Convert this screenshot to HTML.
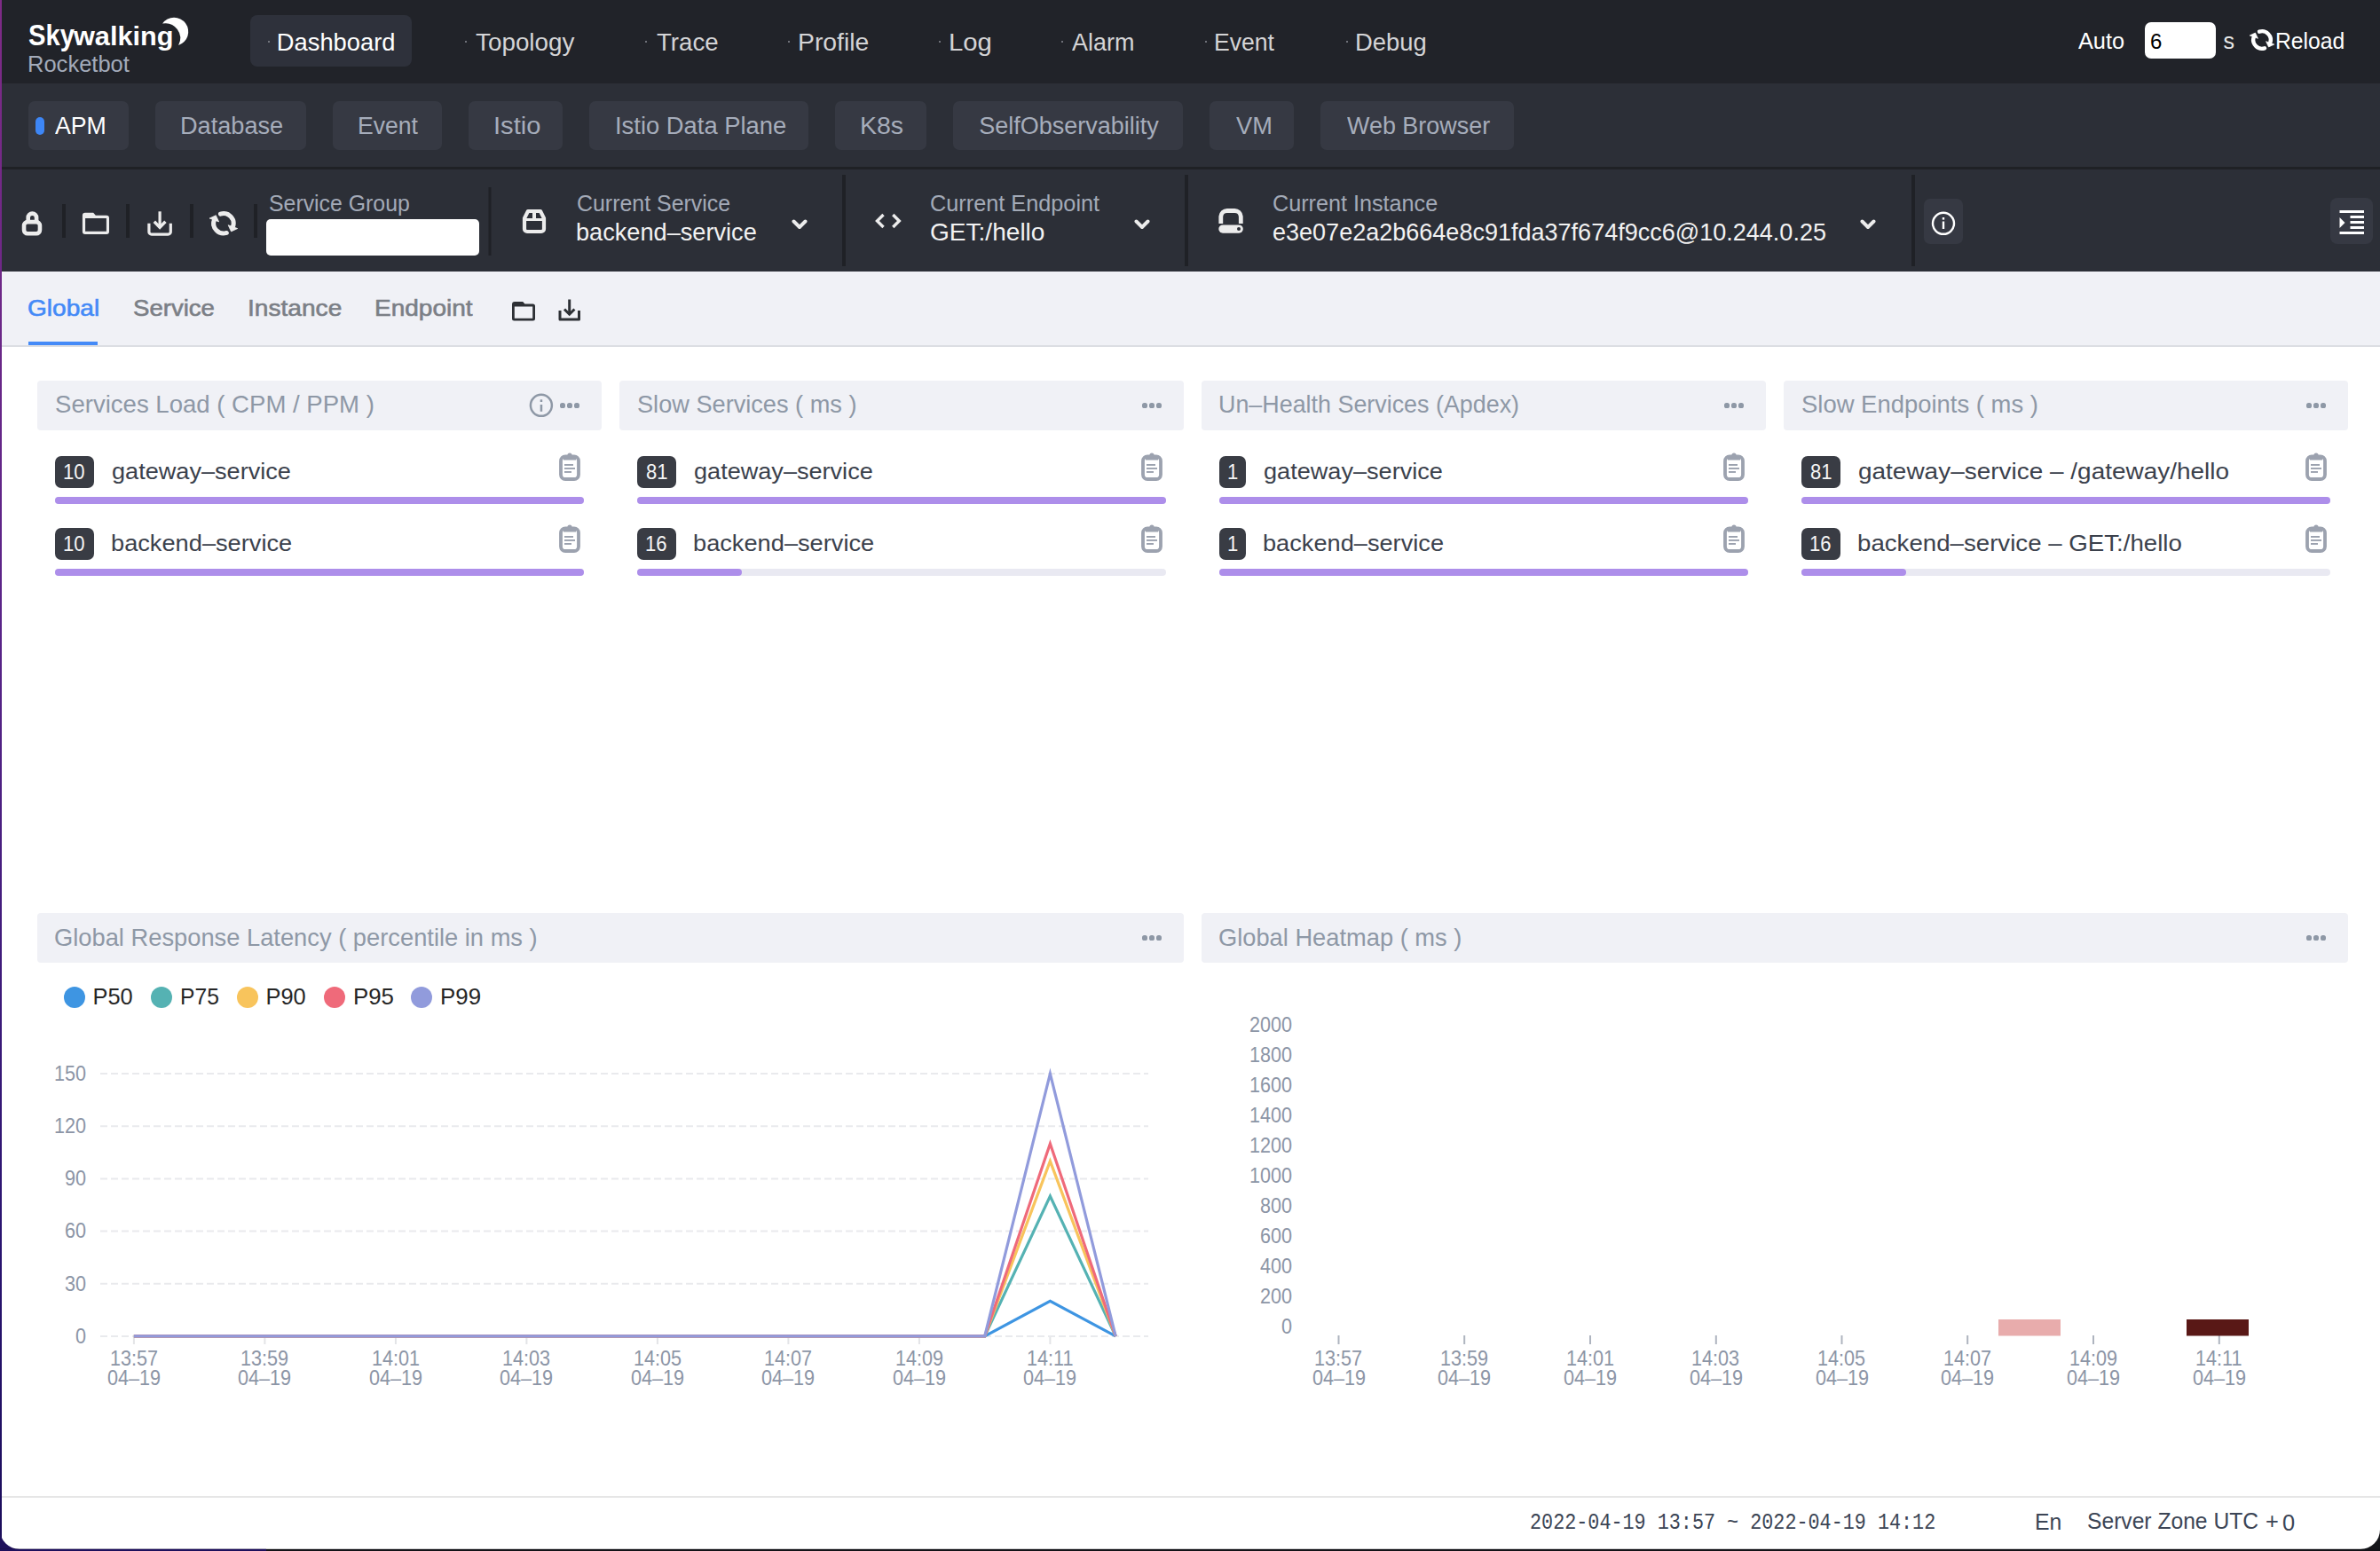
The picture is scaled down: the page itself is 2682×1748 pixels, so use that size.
<!DOCTYPE html>
<html><head><meta charset="utf-8"><title>SkyWalking</title>
<style>
html,body{margin:0;padding:0;}
body{width:2682px;height:1748px;position:relative;overflow:hidden;background:#fff;font-family:"Liberation Sans",sans-serif;}
</style></head><body>
<div style="position:absolute;left:0px;top:0px;width:2682px;height:94px;background:#212329;border-radius:0px;"></div>
<div style="position:absolute;left:0px;top:94px;width:2682px;height:94px;background:#2c2f37;border-radius:0px;"></div>
<div style="position:absolute;left:0px;top:188px;width:2682px;height:2.5px;background:#1f2125;border-radius:0px;"></div>
<div style="position:absolute;left:0px;top:191px;width:2682px;height:115px;background:#2c2f37;border-radius:0px;"></div>
<div style="position:absolute;left:0px;top:306px;width:2682px;height:83px;background:#f0f1f6;border-radius:0px;"></div>
<div style="position:absolute;left:0px;top:389px;width:2682px;height:2px;background:#dcdee3;border-radius:0px;"></div>
<div style="position:absolute;left:0px;top:1686px;width:2682px;height:2px;background:#e6e6e6;border-radius:0px;"></div>
<svg style="position:absolute;left:0;top:0" width="240" height="94" viewBox="0 0 240 94">
<path d="M183.1 26.6 A16 16 0 1 1 201.1 51 A16.8 16.8 0 0 0 183.1 26.6 Z" fill="#fff"/>
</svg>
<div style="position:absolute;left:31.64px;top:23.24px;font-family:'Liberation Sans';font-size:33.50px;line-height:33.50px;color:#fff;font-weight:bold;white-space:pre;transform:scaleX(0.8719);transform-origin:0 0;">Sky</div>
<div style="position:absolute;left:82.98px;top:26.10px;font-family:'Liberation Sans';font-size:30.00px;line-height:30.00px;color:#fff;font-weight:bold;white-space:pre;transform:scaleX(1.0223);transform-origin:0 0;">walking</div>
<div style="position:absolute;left:31.01px;top:59.83px;font-family:'Liberation Sans';font-size:25.00px;line-height:25.00px;color:#a3abba;font-weight:normal;white-space:pre;transform:scaleX(1.0208);transform-origin:0 0;">Rocketbot</div>
<div style="position:absolute;left:282px;top:17px;width:182px;height:58px;background:#2e313b;border-radius:8px;"></div>
<div style="position:absolute;left:311.87px;top:33.89px;font-family:'Liberation Sans';font-size:27.30px;line-height:27.30px;color:#ffffff;font-weight:normal;white-space:pre;">Dashboard</div>
<div style="position:absolute;left:302px;top:46px;width:2px;height:2px;background:#8a8d94;border-radius:1px;"></div>
<div style="position:absolute;left:535.57px;top:33.89px;font-family:'Liberation Sans';font-size:27.30px;line-height:27.30px;color:#d4d4d6;font-weight:normal;white-space:pre;transform:scaleX(1.0197);transform-origin:0 0;">Topology</div>
<div style="position:absolute;left:524px;top:46px;width:2px;height:2px;background:#8a8d94;border-radius:1px;"></div>
<div style="position:absolute;left:739.57px;top:33.89px;font-family:'Liberation Sans';font-size:27.30px;line-height:27.30px;color:#d4d4d6;font-weight:normal;white-space:pre;transform:scaleX(1.0113);transform-origin:0 0;">Trace</div>
<div style="position:absolute;left:727px;top:46px;width:2px;height:2px;background:#8a8d94;border-radius:1px;"></div>
<div style="position:absolute;left:898.78px;top:33.89px;font-family:'Liberation Sans';font-size:27.30px;line-height:27.30px;color:#d4d4d6;font-weight:normal;white-space:pre;transform:scaleX(1.0385);transform-origin:0 0;">Profile</div>
<div style="position:absolute;left:888px;top:46px;width:2px;height:2px;background:#8a8d94;border-radius:1px;"></div>
<div style="position:absolute;left:1068.71px;top:33.89px;font-family:'Liberation Sans';font-size:27.30px;line-height:27.30px;color:#d4d4d6;font-weight:normal;white-space:pre;transform:scaleX(1.0744);transform-origin:0 0;">Log</div>
<div style="position:absolute;left:1058px;top:46px;width:2px;height:2px;background:#8a8d94;border-radius:1px;"></div>
<div style="position:absolute;left:1208.00px;top:33.89px;font-family:'Liberation Sans';font-size:27.30px;line-height:27.30px;color:#d4d4d6;font-weight:normal;white-space:pre;transform:scaleX(0.9875);transform-origin:0 0;">Alarm</div>
<div style="position:absolute;left:1196px;top:46px;width:2px;height:2px;background:#8a8d94;border-radius:1px;"></div>
<div style="position:absolute;left:1367.92px;top:33.89px;font-family:'Liberation Sans';font-size:27.30px;line-height:27.30px;color:#d4d4d6;font-weight:normal;white-space:pre;transform:scaleX(0.9739);transform-origin:0 0;">Event</div>
<div style="position:absolute;left:1358px;top:46px;width:2px;height:2px;background:#8a8d94;border-radius:1px;"></div>
<div style="position:absolute;left:1526.86px;top:33.89px;font-family:'Liberation Sans';font-size:27.30px;line-height:27.30px;color:#d4d4d6;font-weight:normal;white-space:pre;transform:scaleX(1.0028);transform-origin:0 0;">Debug</div>
<div style="position:absolute;left:1517px;top:46px;width:2px;height:2px;background:#8a8d94;border-radius:1px;"></div>
<div style="position:absolute;left:2342.00px;top:33.83px;font-family:'Liberation Sans';font-size:25.00px;line-height:25.00px;color:#fff;font-weight:normal;white-space:pre;transform:scaleX(1.0116);transform-origin:0 0;">Auto</div>
<div style="position:absolute;left:2417px;top:25px;width:80px;height:41px;background:#fff;border-radius:7px;"></div>
<div style="position:absolute;left:2422.88px;top:34.68px;font-family:'Liberation Sans';font-size:24.00px;line-height:24.00px;color:#000;font-weight:normal;white-space:pre;">6</div>
<div style="position:absolute;left:2505.61px;top:33.83px;font-family:'Liberation Sans';font-size:25.00px;line-height:25.00px;color:#e8e8e8;font-weight:normal;white-space:pre;">s</div>
<svg style="position:absolute;left:0;top:0" width="2682" height="94" viewBox="0 0 2682 94">
<path d="M2545.97 35.68 A9.80 9.80 0 0 1 2558.21 48.35" fill="none" stroke="#fff" stroke-width="4.38" stroke-linecap="round"/>
<path d="M2553.60 46.68 L2562.81 50.03 L2556.53 52.96 Z" fill="#fff" stroke="#fff" stroke-width="0.70" stroke-linejoin="round"/>
<path d="M2552.03 54.32 A9.80 9.80 0 0 1 2539.79 41.65" fill="none" stroke="#fff" stroke-width="4.38" stroke-linecap="round"/>
<path d="M2544.40 43.32 L2535.19 39.97 L2541.47 37.04 Z" fill="#fff" stroke="#fff" stroke-width="0.70" stroke-linejoin="round"/>
</svg>
<div style="position:absolute;left:2564.07px;top:33.83px;font-family:'Liberation Sans';font-size:25.00px;line-height:25.00px;color:#fff;font-weight:normal;white-space:pre;transform:scaleX(0.9886);transform-origin:0 0;">Reload</div>
<div style="position:absolute;left:32px;top:114px;width:113px;height:55px;background:#363943;border-radius:7px;"></div>
<div style="position:absolute;left:62.00px;top:128.84px;font-family:'Liberation Sans';font-size:27.00px;line-height:27.00px;color:#ffffff;font-weight:normal;white-space:pre;transform:scaleX(0.9878);transform-origin:0 0;">APM</div>
<div style="position:absolute;left:175px;top:114px;width:170px;height:55px;background:#363943;border-radius:7px;"></div>
<div style="position:absolute;left:202.88px;top:128.84px;font-family:'Liberation Sans';font-size:27.00px;line-height:27.00px;color:#a6adbb;font-weight:normal;white-space:pre;transform:scaleX(1.0055);transform-origin:0 0;">Database</div>
<div style="position:absolute;left:375px;top:114px;width:123px;height:55px;background:#363943;border-radius:7px;"></div>
<div style="position:absolute;left:402.92px;top:128.84px;font-family:'Liberation Sans';font-size:27.00px;line-height:27.00px;color:#a6adbb;font-weight:normal;white-space:pre;transform:scaleX(0.9847);transform-origin:0 0;">Event</div>
<div style="position:absolute;left:528px;top:114px;width:106px;height:55px;background:#363943;border-radius:7px;"></div>
<div style="position:absolute;left:555.72px;top:128.84px;font-family:'Liberation Sans';font-size:27.00px;line-height:27.00px;color:#a6adbb;font-weight:normal;white-space:pre;transform:scaleX(1.0796);transform-origin:0 0;">Istio</div>
<div style="position:absolute;left:664px;top:114px;width:247px;height:55px;background:#363943;border-radius:7px;"></div>
<div style="position:absolute;left:692.86px;top:128.84px;font-family:'Liberation Sans';font-size:27.00px;line-height:27.00px;color:#a6adbb;font-weight:normal;white-space:pre;transform:scaleX(1.0138);transform-origin:0 0;">Istio Data Plane</div>
<div style="position:absolute;left:941px;top:114px;width:103px;height:55px;background:#363943;border-radius:7px;"></div>
<div style="position:absolute;left:968.77px;top:128.84px;font-family:'Liberation Sans';font-size:27.00px;line-height:27.00px;color:#a6adbb;font-weight:normal;white-space:pre;transform:scaleX(1.0557);transform-origin:0 0;">K8s</div>
<div style="position:absolute;left:1074px;top:114px;width:259px;height:55px;background:#363943;border-radius:7px;"></div>
<div style="position:absolute;left:1103.16px;top:128.84px;font-family:'Liberation Sans';font-size:27.00px;line-height:27.00px;color:#a6adbb;font-weight:normal;white-space:pre;">SelfObservability</div>
<div style="position:absolute;left:1363px;top:114px;width:95px;height:55px;background:#363943;border-radius:7px;"></div>
<div style="position:absolute;left:1393.00px;top:128.84px;font-family:'Liberation Sans';font-size:27.00px;line-height:27.00px;color:#a6adbb;font-weight:normal;white-space:pre;transform:scaleX(1.0083);transform-origin:0 0;">VM</div>
<div style="position:absolute;left:1488px;top:114px;width:218px;height:55px;background:#363943;border-radius:7px;"></div>
<div style="position:absolute;left:1518.00px;top:128.84px;font-family:'Liberation Sans';font-size:27.00px;line-height:27.00px;color:#a6adbb;font-weight:normal;white-space:pre;transform:scaleX(0.9974);transform-origin:0 0;">Web Browser</div>
<div style="position:absolute;left:40px;top:132px;width:10px;height:20px;background:#3d86f6;border-radius:5px;"></div>
<svg style="position:absolute;left:0;top:191px" width="2682" height="115" viewBox="0 191 2682 115">
<!-- lock -->
<path d="M31.7 250 V245.3 A4.7 4.7 0 0 1 41.1 245.3 V250" fill="none" stroke="#ececec" stroke-width="4.6"/>
<rect x="27.05" y="250.1" width="17.9" height="13.2" rx="4" fill="none" stroke="#ececec" stroke-width="4.6"/>
<!-- separators -->
<rect x="70" y="230" width="4" height="38" fill="#1f2126"/>
<rect x="142" y="230" width="4" height="38" fill="#1f2126"/>
<rect x="214" y="230" width="4" height="38" fill="#1f2126"/>
<rect x="286" y="230" width="4" height="38" fill="#1f2126"/>
<!-- folder -->
<path fill-rule="evenodd" fill="#ececec" d="M95.9 239.8 H105.2 L107.8 242.8 H120 A3 3 0 0 1 123 245.8 V261.1 A3 3 0 0 1 120 264.1 H95.9 A3 3 0 0 1 92.9 261.1 V242.8 A3 3 0 0 1 95.9 239.8 Z M96.1 246.1 V260.7 H119.9 V246.1 Z"/>
<!-- download -->
<path d="M180.1 238.3 V256.5" stroke="#ececec" stroke-width="3.2" fill="none"/>
<path d="M173.8 249.8 L180.1 256.3 L186.4 249.8" stroke="#ececec" stroke-width="3.4" fill="none"/>
<path d="M167.9 251.8 V261 A3 3 0 0 0 170.9 264.2 H189.3 A3 3 0 0 0 192.3 261 V251.8" stroke="#ececec" stroke-width="3.2" fill="none"/>
<!-- refresh -->
<path d="M248.44 241.15 A11.20 11.20 0 0 1 262.42 255.63" fill="none" stroke="#ececec" stroke-width="5.00" stroke-linecap="round"/>
<path d="M257.16 253.72 L267.69 257.55 L260.51 260.89 Z" fill="#ececec" stroke="#ececec" stroke-width="0.80" stroke-linejoin="round"/>
<path d="M255.36 262.45 A11.20 11.20 0 0 1 241.38 247.97" fill="none" stroke="#ececec" stroke-width="5.00" stroke-linecap="round"/>
<path d="M246.64 249.88 L236.11 246.05 L243.29 242.71 Z" fill="#ececec" stroke="#ececec" stroke-width="0.80" stroke-linejoin="round"/>
<!-- separators between selectors -->
<rect x="550.5" y="211" width="3" height="77" fill="#1f2126"/>
<rect x="949" y="197" width="4" height="103" fill="#1f2126"/>
<rect x="1335" y="197" width="4" height="103" fill="#1f2126"/>
<rect x="2154" y="197" width="4" height="103" fill="#1f2126"/>
<!-- service icon -->
<path d="M591 246 L595 238 H609 L613 246 V258 A 3 3 0 0 1 610 261 H594 A 3 3 0 0 1 591 258 Z" fill="none" stroke="#ececec" stroke-width="4.2" stroke-linejoin="round"/>
<rect x="591" y="246" width="22" height="3" fill="#ececec"/>
<rect x="600" y="238" width="4" height="10" fill="#ececec"/>
<!-- chevrons -->
<path d="M894.5 249.5 L901 256 L907.5 249.5" fill="none" stroke="#ececec" stroke-width="4" stroke-linecap="round" stroke-linejoin="round"/>
<path d="M1280.5 249.5 L1287 256 L1293.5 249.5" fill="none" stroke="#ececec" stroke-width="4" stroke-linecap="round" stroke-linejoin="round"/>
<path d="M2098.5 249.5 L2105 256 L2111.5 249.5" fill="none" stroke="#ececec" stroke-width="4" stroke-linecap="round" stroke-linejoin="round"/>
<!-- code icon -->
<path d="M995.5 242 L988.5 249 L995.5 256" fill="none" stroke="#ececec" stroke-width="3.4"/>
<path d="M1006.3 242 L1013.3 249 L1006.3 256" fill="none" stroke="#ececec" stroke-width="3.4"/>
<!-- instance icon -->
<path d="M1375.8 252 V244 A 7 7 0 0 1 1382.8 237.5 H1391.3 A 7 7 0 0 1 1398.3 244 V252" fill="none" stroke="#ececec" stroke-width="4.8"/>
<rect x="1373.3" y="253.4" width="27.5" height="9.3" rx="4.65" fill="#ececec"/>
<circle cx="1396" cy="258" r="2" fill="#2c2f37"/>
<!-- info button -->
<rect x="2168" y="224" width="44" height="51" rx="7" fill="#363943"/>
<circle cx="2190" cy="251.8" r="12" fill="none" stroke="#fff" stroke-width="2.4"/>
<rect x="2188.8" y="245" width="2.4" height="2.6" fill="#fff"/>
<rect x="2188.8" y="249.5" width="2.4" height="8.5" fill="#fff"/>
<!-- right indent button -->
<rect x="2626" y="223" width="48" height="52" rx="8" fill="#363943"/>
<rect x="2636.5" y="237" width="27.5" height="3" fill="#fff"/>
<rect x="2648.5" y="243" width="15.5" height="3" fill="#fff"/>
<rect x="2648.5" y="249" width="15.5" height="3" fill="#fff"/>
<rect x="2648.5" y="255" width="15.5" height="3" fill="#fff"/>
<rect x="2636.5" y="261" width="27.5" height="3" fill="#fff"/>
<path d="M2636.5 245 L2642.5 251 L2636.5 257 Z" fill="#fff"/>
</svg>
<div style="position:absolute;left:303.22px;top:216.83px;font-family:'Liberation Sans';font-size:25.00px;line-height:25.00px;color:#a3aab7;font-weight:normal;white-space:pre;transform:scaleX(0.9937);transform-origin:0 0;">Service Group</div>
<div style="position:absolute;left:300px;top:247px;width:240px;height:41px;background:#fff;border-radius:5px;"></div>
<div style="position:absolute;left:649.83px;top:216.83px;font-family:'Liberation Sans';font-size:25.00px;line-height:25.00px;color:#a3aab7;font-weight:normal;white-space:pre;transform:scaleX(0.9972);transform-origin:0 0;">Current Service</div>
<div style="position:absolute;left:649.30px;top:247.72px;font-family:'Liberation Sans';font-size:27.50px;line-height:27.50px;color:#f2f2f2;font-weight:normal;white-space:pre;transform:scaleX(0.9875);transform-origin:0 0;">backend–service</div>
<div style="position:absolute;left:1047.82px;top:216.83px;font-family:'Liberation Sans';font-size:25.00px;line-height:25.00px;color:#a3aab7;font-weight:normal;white-space:pre;transform:scaleX(1.0111);transform-origin:0 0;">Current Endpoint</div>
<div style="position:absolute;left:1047.68px;top:247.72px;font-family:'Liberation Sans';font-size:27.50px;line-height:27.50px;color:#f2f2f2;font-weight:normal;white-space:pre;transform:scaleX(1.0204);transform-origin:0 0;">GET:/hello</div>
<div style="position:absolute;left:1433.82px;top:216.83px;font-family:'Liberation Sans';font-size:25.00px;line-height:25.00px;color:#a3aab7;font-weight:normal;white-space:pre;transform:scaleX(1.0075);transform-origin:0 0;">Current Instance</div>
<div style="position:absolute;left:1434.16px;top:247.72px;font-family:'Liberation Sans';font-size:27.50px;line-height:27.50px;color:#f2f2f2;font-weight:normal;white-space:pre;transform:scaleX(0.9826);transform-origin:0 0;">e3e07e2a2b664e8c91fda37f674f9cc6@10.244.0.25</div>
<div style="position:absolute;left:30.68px;top:333.82px;font-family:'Liberation Sans';font-size:26.20px;line-height:26.20px;color:#448af7;font-weight:normal;white-space:pre;transform:scaleX(1.0717);transform-origin:0 0;-webkit-text-stroke:0.6px #448af7;">Global</div>
<div style="position:absolute;left:32px;top:385px;width:78px;height:4px;background:#448af7;border-radius:0px;"></div>
<div style="position:absolute;left:149.74px;top:333.82px;font-family:'Liberation Sans';font-size:26.20px;line-height:26.20px;color:#7b7f86;font-weight:normal;white-space:pre;transform:scaleX(1.0528);transform-origin:0 0;-webkit-text-stroke:0.6px #7b7f86;">Service</div>
<div style="position:absolute;left:278.80px;top:333.82px;font-family:'Liberation Sans';font-size:26.20px;line-height:26.20px;color:#7b7f86;font-weight:normal;white-space:pre;transform:scaleX(1.0736);transform-origin:0 0;-webkit-text-stroke:0.6px #7b7f86;">Instance</div>
<div style="position:absolute;left:422.31px;top:333.82px;font-family:'Liberation Sans';font-size:26.20px;line-height:26.20px;color:#7b7f86;font-weight:normal;white-space:pre;transform:scaleX(1.0692);transform-origin:0 0;-webkit-text-stroke:0.6px #7b7f86;">Endpoint</div>
<svg style="position:absolute;left:560px;top:320px" width="120" height="60" viewBox="560 320 120 60">
<path fill-rule="evenodd" fill="#2d3035" d="M580 340 H589.2 L591.4 342.6 H600.5 A2.5 2.5 0 0 1 603 345.1 V359 A2.5 2.5 0 0 1 600.5 361.5 H579.5 A2.5 2.5 0 0 1 577 359 V343 A3 3 0 0 1 580 340 Z M579.8 345.6 V358.8 H600.2 V345.6 Z"/>
<path d="M641.7 337.5 V354" stroke="#2d3035" stroke-width="3" fill="none"/>
<path d="M636 348.5 L641.7 354.2 L647.4 348.5" stroke="#2d3035" stroke-width="3" fill="none"/>
<path d="M631 350 V360 H652.5 V350" stroke="#2d3035" stroke-width="3" fill="none" stroke-linejoin="round"/>
</svg>
<div style="position:absolute;left:0px;top:0px;width:2px;height:1748px;background:linear-gradient(#7e2b86, #5a2488 40%, #2a1470 80%, #1a0c5a);border-radius:0px;"></div>
<div style="position:absolute;left:42px;top:429px;width:636px;height:56px;background:#f0f1f6;border-radius:4px;"></div>
<div style="position:absolute;left:61.54px;top:442.49px;font-family:'Liberation Sans';font-size:28.00px;line-height:28.00px;color:#8e98a6;font-weight:normal;white-space:pre;transform:scaleX(0.9842);transform-origin:0 0;">Services Load ( CPM / PPM )</div>
<svg style="position:absolute;left:594px;top:441px" width="32" height="32" viewBox="0 0 32 32">
<circle cx="15.9" cy="15.8" r="12" fill="none" stroke="#8e98a6" stroke-width="2.5"/>
<rect x="14.7" y="9.3" width="2.5" height="2.7" fill="#8e98a6"/>
<rect x="14.7" y="15" width="2.5" height="7.8" fill="#8e98a6"/>
</svg>
<div style="position:absolute;left:631.4px;top:454.4px;width:5.2px;height:5.2px;border-radius:50%;background:#8e98a6"></div>
<div style="position:absolute;left:639.4px;top:454.4px;width:5.2px;height:5.2px;border-radius:50%;background:#8e98a6"></div>
<div style="position:absolute;left:647.4px;top:454.4px;width:5.2px;height:5.2px;border-radius:50%;background:#8e98a6"></div>
<div style="position:absolute;left:62px;top:514px;width:44px;height:36px;background:#393c44;border-radius:7px;"></div>
<div style="position:absolute;left:71.31px;top:519.68px;font-family:'Liberation Sans';font-size:24.00px;line-height:24.00px;color:#f5f5f5;font-weight:normal;white-space:pre;transform:scaleX(0.9200);transform-origin:0 0;">10</div>
<div style="position:absolute;left:125.75px;top:517.56px;font-family:'Liberation Sans';font-size:26.50px;line-height:26.50px;color:#3b414c;font-weight:normal;white-space:pre;transform:scaleX(1.0231);transform-origin:0 0;">gateway–service</div>
<svg style="position:absolute;left:629px;top:510px" width="26" height="32" viewBox="0 0 26 32">
<rect x="3" y="4.5" width="20" height="25.5" rx="5" fill="none" stroke="#9ca2af" stroke-width="3.8"/>
<path d="M6 3 H20 V8.5 H6 Z" fill="#9ca2af"/>
<circle cx="13" cy="3" r="2.6" fill="#9ca2af"/>
<rect x="7" y="13" width="10" height="1.9" fill="#9ca2af"/>
<rect x="7" y="17" width="12" height="1.9" fill="#9ca2af"/>
<rect x="7" y="21" width="8" height="1.9" fill="#9ca2af"/>
</svg>
<div style="position:absolute;left:62px;top:560px;width:596px;height:8px;background:#e9e9f2;border-radius:4px;"></div>
<div style="position:absolute;left:62px;top:560px;width:596.0px;height:8px;background:#ad8eea;border-radius:4px;"></div>
<div style="position:absolute;left:62px;top:595px;width:44px;height:36px;background:#393c44;border-radius:7px;"></div>
<div style="position:absolute;left:71.31px;top:600.68px;font-family:'Liberation Sans';font-size:24.00px;line-height:24.00px;color:#f5f5f5;font-weight:normal;white-space:pre;transform:scaleX(0.9200);transform-origin:0 0;">10</div>
<div style="position:absolute;left:124.90px;top:598.56px;font-family:'Liberation Sans';font-size:26.50px;line-height:26.50px;color:#3b414c;font-weight:normal;white-space:pre;transform:scaleX(1.0268);transform-origin:0 0;">backend–service</div>
<svg style="position:absolute;left:629px;top:591px" width="26" height="32" viewBox="0 0 26 32">
<rect x="3" y="4.5" width="20" height="25.5" rx="5" fill="none" stroke="#9ca2af" stroke-width="3.8"/>
<path d="M6 3 H20 V8.5 H6 Z" fill="#9ca2af"/>
<circle cx="13" cy="3" r="2.6" fill="#9ca2af"/>
<rect x="7" y="13" width="10" height="1.9" fill="#9ca2af"/>
<rect x="7" y="17" width="12" height="1.9" fill="#9ca2af"/>
<rect x="7" y="21" width="8" height="1.9" fill="#9ca2af"/>
</svg>
<div style="position:absolute;left:62px;top:641px;width:596px;height:8px;background:#e9e9f2;border-radius:4px;"></div>
<div style="position:absolute;left:62px;top:641px;width:596.0px;height:8px;background:#ad8eea;border-radius:4px;"></div>
<div style="position:absolute;left:698px;top:429px;width:636px;height:56px;background:#f0f1f6;border-radius:4px;"></div>
<div style="position:absolute;left:717.55px;top:442.49px;font-family:'Liberation Sans';font-size:28.00px;line-height:28.00px;color:#8e98a6;font-weight:normal;white-space:pre;transform:scaleX(0.9699);transform-origin:0 0;">Slow Services ( ms )</div>
<div style="position:absolute;left:1287.4px;top:454.4px;width:5.2px;height:5.2px;border-radius:50%;background:#8e98a6"></div>
<div style="position:absolute;left:1295.4px;top:454.4px;width:5.2px;height:5.2px;border-radius:50%;background:#8e98a6"></div>
<div style="position:absolute;left:1303.4px;top:454.4px;width:5.2px;height:5.2px;border-radius:50%;background:#8e98a6"></div>
<div style="position:absolute;left:718px;top:514px;width:44px;height:36px;background:#393c44;border-radius:7px;"></div>
<div style="position:absolute;left:727.82px;top:519.68px;font-family:'Liberation Sans';font-size:24.00px;line-height:24.00px;color:#f5f5f5;font-weight:normal;white-space:pre;transform:scaleX(0.9200);transform-origin:0 0;">81</div>
<div style="position:absolute;left:781.75px;top:517.56px;font-family:'Liberation Sans';font-size:26.50px;line-height:26.50px;color:#3b414c;font-weight:normal;white-space:pre;transform:scaleX(1.0221);transform-origin:0 0;">gateway–service</div>
<svg style="position:absolute;left:1285px;top:510px" width="26" height="32" viewBox="0 0 26 32">
<rect x="3" y="4.5" width="20" height="25.5" rx="5" fill="none" stroke="#9ca2af" stroke-width="3.8"/>
<path d="M6 3 H20 V8.5 H6 Z" fill="#9ca2af"/>
<circle cx="13" cy="3" r="2.6" fill="#9ca2af"/>
<rect x="7" y="13" width="10" height="1.9" fill="#9ca2af"/>
<rect x="7" y="17" width="12" height="1.9" fill="#9ca2af"/>
<rect x="7" y="21" width="8" height="1.9" fill="#9ca2af"/>
</svg>
<div style="position:absolute;left:718px;top:560px;width:596px;height:8px;background:#e9e9f2;border-radius:4px;"></div>
<div style="position:absolute;left:718px;top:560px;width:596.0px;height:8px;background:#ad8eea;border-radius:4px;"></div>
<div style="position:absolute;left:718px;top:595px;width:44px;height:36px;background:#393c44;border-radius:7px;"></div>
<div style="position:absolute;left:727.48px;top:600.68px;font-family:'Liberation Sans';font-size:24.00px;line-height:24.00px;color:#f5f5f5;font-weight:normal;white-space:pre;transform:scaleX(0.9200);transform-origin:0 0;">16</div>
<div style="position:absolute;left:780.90px;top:598.56px;font-family:'Liberation Sans';font-size:26.50px;line-height:26.50px;color:#3b414c;font-weight:normal;white-space:pre;transform:scaleX(1.0268);transform-origin:0 0;">backend–service</div>
<svg style="position:absolute;left:1285px;top:591px" width="26" height="32" viewBox="0 0 26 32">
<rect x="3" y="4.5" width="20" height="25.5" rx="5" fill="none" stroke="#9ca2af" stroke-width="3.8"/>
<path d="M6 3 H20 V8.5 H6 Z" fill="#9ca2af"/>
<circle cx="13" cy="3" r="2.6" fill="#9ca2af"/>
<rect x="7" y="13" width="10" height="1.9" fill="#9ca2af"/>
<rect x="7" y="17" width="12" height="1.9" fill="#9ca2af"/>
<rect x="7" y="21" width="8" height="1.9" fill="#9ca2af"/>
</svg>
<div style="position:absolute;left:718px;top:641px;width:596px;height:8px;background:#e9e9f2;border-radius:4px;"></div>
<div style="position:absolute;left:718px;top:641px;width:117.72839506172839px;height:8px;background:#ad8eea;border-radius:4px;"></div>
<div style="position:absolute;left:1354px;top:429px;width:636px;height:56px;background:#f0f1f6;border-radius:4px;"></div>
<div style="position:absolute;left:1372.72px;top:442.49px;font-family:'Liberation Sans';font-size:28.00px;line-height:28.00px;color:#8e98a6;font-weight:normal;white-space:pre;transform:scaleX(0.9598);transform-origin:0 0;">Un–Health Services (Apdex)</div>
<div style="position:absolute;left:1943.4px;top:454.4px;width:5.2px;height:5.2px;border-radius:50%;background:#8e98a6"></div>
<div style="position:absolute;left:1951.4px;top:454.4px;width:5.2px;height:5.2px;border-radius:50%;background:#8e98a6"></div>
<div style="position:absolute;left:1959.4px;top:454.4px;width:5.2px;height:5.2px;border-radius:50%;background:#8e98a6"></div>
<div style="position:absolute;left:1374px;top:514px;width:30px;height:36px;background:#393c44;border-radius:7px;"></div>
<div style="position:absolute;left:1382.62px;top:519.68px;font-family:'Liberation Sans';font-size:24.00px;line-height:24.00px;color:#f5f5f5;font-weight:normal;white-space:pre;transform:scaleX(0.9200);transform-origin:0 0;">1</div>
<div style="position:absolute;left:1423.55px;top:517.56px;font-family:'Liberation Sans';font-size:26.50px;line-height:26.50px;color:#3b414c;font-weight:normal;white-space:pre;transform:scaleX(1.0231);transform-origin:0 0;">gateway–service</div>
<svg style="position:absolute;left:1941px;top:510px" width="26" height="32" viewBox="0 0 26 32">
<rect x="3" y="4.5" width="20" height="25.5" rx="5" fill="none" stroke="#9ca2af" stroke-width="3.8"/>
<path d="M6 3 H20 V8.5 H6 Z" fill="#9ca2af"/>
<circle cx="13" cy="3" r="2.6" fill="#9ca2af"/>
<rect x="7" y="13" width="10" height="1.9" fill="#9ca2af"/>
<rect x="7" y="17" width="12" height="1.9" fill="#9ca2af"/>
<rect x="7" y="21" width="8" height="1.9" fill="#9ca2af"/>
</svg>
<div style="position:absolute;left:1374px;top:560px;width:596px;height:8px;background:#e9e9f2;border-radius:4px;"></div>
<div style="position:absolute;left:1374px;top:560px;width:596.0px;height:8px;background:#ad8eea;border-radius:4px;"></div>
<div style="position:absolute;left:1374px;top:595px;width:30px;height:36px;background:#393c44;border-radius:7px;"></div>
<div style="position:absolute;left:1382.62px;top:600.68px;font-family:'Liberation Sans';font-size:24.00px;line-height:24.00px;color:#f5f5f5;font-weight:normal;white-space:pre;transform:scaleX(0.9200);transform-origin:0 0;">1</div>
<div style="position:absolute;left:1422.70px;top:598.56px;font-family:'Liberation Sans';font-size:26.50px;line-height:26.50px;color:#3b414c;font-weight:normal;white-space:pre;transform:scaleX(1.0258);transform-origin:0 0;">backend–service</div>
<svg style="position:absolute;left:1941px;top:591px" width="26" height="32" viewBox="0 0 26 32">
<rect x="3" y="4.5" width="20" height="25.5" rx="5" fill="none" stroke="#9ca2af" stroke-width="3.8"/>
<path d="M6 3 H20 V8.5 H6 Z" fill="#9ca2af"/>
<circle cx="13" cy="3" r="2.6" fill="#9ca2af"/>
<rect x="7" y="13" width="10" height="1.9" fill="#9ca2af"/>
<rect x="7" y="17" width="12" height="1.9" fill="#9ca2af"/>
<rect x="7" y="21" width="8" height="1.9" fill="#9ca2af"/>
</svg>
<div style="position:absolute;left:1374px;top:641px;width:596px;height:8px;background:#e9e9f2;border-radius:4px;"></div>
<div style="position:absolute;left:1374px;top:641px;width:596.0px;height:8px;background:#ad8eea;border-radius:4px;"></div>
<div style="position:absolute;left:2010px;top:429px;width:636px;height:56px;background:#f0f1f6;border-radius:4px;"></div>
<div style="position:absolute;left:2029.54px;top:442.49px;font-family:'Liberation Sans';font-size:28.00px;line-height:28.00px;color:#8e98a6;font-weight:normal;white-space:pre;transform:scaleX(0.9800);transform-origin:0 0;">Slow Endpoints ( ms )</div>
<div style="position:absolute;left:2599.4px;top:454.4px;width:5.2px;height:5.2px;border-radius:50%;background:#8e98a6"></div>
<div style="position:absolute;left:2607.4px;top:454.4px;width:5.2px;height:5.2px;border-radius:50%;background:#8e98a6"></div>
<div style="position:absolute;left:2615.4px;top:454.4px;width:5.2px;height:5.2px;border-radius:50%;background:#8e98a6"></div>
<div style="position:absolute;left:2030px;top:514px;width:44px;height:36px;background:#393c44;border-radius:7px;"></div>
<div style="position:absolute;left:2039.82px;top:519.68px;font-family:'Liberation Sans';font-size:24.00px;line-height:24.00px;color:#f5f5f5;font-weight:normal;white-space:pre;transform:scaleX(0.9200);transform-origin:0 0;">81</div>
<div style="position:absolute;left:2093.73px;top:517.56px;font-family:'Liberation Sans';font-size:26.50px;line-height:26.50px;color:#3b414c;font-weight:normal;white-space:pre;transform:scaleX(1.0551);transform-origin:0 0;">gateway–service – /gateway/hello</div>
<svg style="position:absolute;left:2597px;top:510px" width="26" height="32" viewBox="0 0 26 32">
<rect x="3" y="4.5" width="20" height="25.5" rx="5" fill="none" stroke="#9ca2af" stroke-width="3.8"/>
<path d="M6 3 H20 V8.5 H6 Z" fill="#9ca2af"/>
<circle cx="13" cy="3" r="2.6" fill="#9ca2af"/>
<rect x="7" y="13" width="10" height="1.9" fill="#9ca2af"/>
<rect x="7" y="17" width="12" height="1.9" fill="#9ca2af"/>
<rect x="7" y="21" width="8" height="1.9" fill="#9ca2af"/>
</svg>
<div style="position:absolute;left:2030px;top:560px;width:596px;height:8px;background:#e9e9f2;border-radius:4px;"></div>
<div style="position:absolute;left:2030px;top:560px;width:596.0px;height:8px;background:#ad8eea;border-radius:4px;"></div>
<div style="position:absolute;left:2030px;top:595px;width:44px;height:36px;background:#393c44;border-radius:7px;"></div>
<div style="position:absolute;left:2039.48px;top:600.68px;font-family:'Liberation Sans';font-size:24.00px;line-height:24.00px;color:#f5f5f5;font-weight:normal;white-space:pre;transform:scaleX(0.9200);transform-origin:0 0;">16</div>
<div style="position:absolute;left:2092.87px;top:598.56px;font-family:'Liberation Sans';font-size:26.50px;line-height:26.50px;color:#3b414c;font-weight:normal;white-space:pre;transform:scaleX(1.0435);transform-origin:0 0;">backend–service – GET:/hello</div>
<svg style="position:absolute;left:2597px;top:591px" width="26" height="32" viewBox="0 0 26 32">
<rect x="3" y="4.5" width="20" height="25.5" rx="5" fill="none" stroke="#9ca2af" stroke-width="3.8"/>
<path d="M6 3 H20 V8.5 H6 Z" fill="#9ca2af"/>
<circle cx="13" cy="3" r="2.6" fill="#9ca2af"/>
<rect x="7" y="13" width="10" height="1.9" fill="#9ca2af"/>
<rect x="7" y="17" width="12" height="1.9" fill="#9ca2af"/>
<rect x="7" y="21" width="8" height="1.9" fill="#9ca2af"/>
</svg>
<div style="position:absolute;left:2030px;top:641px;width:596px;height:8px;background:#e9e9f2;border-radius:4px;"></div>
<div style="position:absolute;left:2030px;top:641px;width:117.72839506172839px;height:8px;background:#ad8eea;border-radius:4px;"></div>
<div style="position:absolute;left:42px;top:1029px;width:1292px;height:56px;background:#f0f1f6;border-radius:4px;"></div>
<div style="position:absolute;left:60.72px;top:1042.69px;font-family:'Liberation Sans';font-size:28.00px;line-height:28.00px;color:#8e98a6;font-weight:normal;white-space:pre;transform:scaleX(0.9749);transform-origin:0 0;">Global Response Latency ( percentile in ms )</div>
<div style="position:absolute;left:1287.4px;top:1054.4px;width:5.2px;height:5.2px;border-radius:50%;background:#8e98a6"></div>
<div style="position:absolute;left:1295.4px;top:1054.4px;width:5.2px;height:5.2px;border-radius:50%;background:#8e98a6"></div>
<div style="position:absolute;left:1303.4px;top:1054.4px;width:5.2px;height:5.2px;border-radius:50%;background:#8e98a6"></div>
<div style="position:absolute;left:1354px;top:1029px;width:1292px;height:56px;background:#f0f1f6;border-radius:4px;"></div>
<div style="position:absolute;left:1373.12px;top:1042.69px;font-family:'Liberation Sans';font-size:28.00px;line-height:28.00px;color:#8e98a6;font-weight:normal;white-space:pre;transform:scaleX(0.9739);transform-origin:0 0;">Global Heatmap ( ms )</div>
<div style="position:absolute;left:2599.4px;top:1054.4px;width:5.2px;height:5.2px;border-radius:50%;background:#8e98a6"></div>
<div style="position:absolute;left:2607.4px;top:1054.4px;width:5.2px;height:5.2px;border-radius:50%;background:#8e98a6"></div>
<div style="position:absolute;left:2615.4px;top:1054.4px;width:5.2px;height:5.2px;border-radius:50%;background:#8e98a6"></div>
<div style="position:absolute;left:72px;top:1112px;width:24px;height:24px;border-radius:50%;background:#3e95e2"></div>
<div style="position:absolute;left:104.52px;top:1111.29px;font-family:'Liberation Sans';font-size:25.40px;line-height:25.40px;color:#262626;font-weight:normal;white-space:pre;">P50</div>
<div style="position:absolute;left:170px;top:1112px;width:24px;height:24px;border-radius:50%;background:#55b2b3"></div>
<div style="position:absolute;left:203.07px;top:1111.29px;font-family:'Liberation Sans';font-size:25.40px;line-height:25.40px;color:#262626;font-weight:normal;white-space:pre;transform:scaleX(0.9720);transform-origin:0 0;">P75</div>
<div style="position:absolute;left:267px;top:1112px;width:24px;height:24px;border-radius:50%;background:#f8c45c"></div>
<div style="position:absolute;left:299.52px;top:1111.29px;font-family:'Liberation Sans';font-size:25.40px;line-height:25.40px;color:#262626;font-weight:normal;white-space:pre;">P90</div>
<div style="position:absolute;left:365px;top:1112px;width:24px;height:24px;border-radius:50%;background:#ef6a7a"></div>
<div style="position:absolute;left:397.58px;top:1111.29px;font-family:'Liberation Sans';font-size:25.40px;line-height:25.40px;color:#262626;font-weight:normal;white-space:pre;transform:scaleX(1.0171);transform-origin:0 0;">P95</div>
<div style="position:absolute;left:463.3px;top:1112px;width:24px;height:24px;border-radius:50%;background:#919bdc"></div>
<div style="position:absolute;left:495.98px;top:1111.29px;font-family:'Liberation Sans';font-size:25.40px;line-height:25.40px;color:#262626;font-weight:normal;white-space:pre;transform:scaleX(1.0194);transform-origin:0 0;">P99</div>
<svg style="position:absolute;left:0;top:0" width="2682" height="1748" viewBox="0 0 2682 1748">
<line x1="113" y1="1505.9" x2="1294" y2="1505.9" stroke="#e9eaed" stroke-width="2" stroke-dasharray="8 4"/>
<line x1="113" y1="1446.7" x2="1294" y2="1446.7" stroke="#e9eaed" stroke-width="2" stroke-dasharray="8 4"/>
<line x1="113" y1="1387.5" x2="1294" y2="1387.5" stroke="#e9eaed" stroke-width="2" stroke-dasharray="8 4"/>
<line x1="113" y1="1328.4" x2="1294" y2="1328.4" stroke="#e9eaed" stroke-width="2" stroke-dasharray="8 4"/>
<line x1="113" y1="1269.2" x2="1294" y2="1269.2" stroke="#e9eaed" stroke-width="2" stroke-dasharray="8 4"/>
<line x1="113" y1="1210.0" x2="1294" y2="1210.0" stroke="#e9eaed" stroke-width="2" stroke-dasharray="8 4"/>
<line x1="150.9" y1="1506.9" x2="150.9" y2="1515" stroke="#e3e4e7" stroke-width="2"/>
<line x1="298.4" y1="1506.9" x2="298.4" y2="1515" stroke="#e3e4e7" stroke-width="2"/>
<line x1="445.9" y1="1506.9" x2="445.9" y2="1515" stroke="#e3e4e7" stroke-width="2"/>
<line x1="593.4" y1="1506.9" x2="593.4" y2="1515" stroke="#e3e4e7" stroke-width="2"/>
<line x1="740.9" y1="1506.9" x2="740.9" y2="1515" stroke="#e3e4e7" stroke-width="2"/>
<line x1="888.4" y1="1506.9" x2="888.4" y2="1515" stroke="#e3e4e7" stroke-width="2"/>
<line x1="1035.9" y1="1506.9" x2="1035.9" y2="1515" stroke="#e3e4e7" stroke-width="2"/>
<line x1="1183.4" y1="1506.9" x2="1183.4" y2="1515" stroke="#e3e4e7" stroke-width="2"/>
<polyline points="150.9,1505.9 224.7,1505.9 298.4,1505.9 372.1,1505.9 445.9,1505.9 519.6,1505.9 593.4,1505.9 667.1,1505.9 740.9,1505.9 814.6,1505.9 888.4,1505.9 962.1,1505.9 1035.9,1505.9 1109.7,1505.9 1183.4,1466.4 1257.2,1505.9" fill="none" stroke="#3e95e2" stroke-width="3.2" stroke-linejoin="miter" stroke-miterlimit="10"/>
<polyline points="150.9,1505.9 224.7,1505.9 298.4,1505.9 372.1,1505.9 445.9,1505.9 519.6,1505.9 593.4,1505.9 667.1,1505.9 740.9,1505.9 814.6,1505.9 888.4,1505.9 962.1,1505.9 1035.9,1505.9 1109.7,1505.9 1183.4,1348.1 1257.2,1505.9" fill="none" stroke="#55b2b3" stroke-width="3.2" stroke-linejoin="miter" stroke-miterlimit="10"/>
<polyline points="150.9,1505.9 224.7,1505.9 298.4,1505.9 372.1,1505.9 445.9,1505.9 519.6,1505.9 593.4,1505.9 667.1,1505.9 740.9,1505.9 814.6,1505.9 888.4,1505.9 962.1,1505.9 1035.9,1505.9 1109.7,1505.9 1183.4,1308.6 1257.2,1505.9" fill="none" stroke="#f8c45c" stroke-width="3.2" stroke-linejoin="miter" stroke-miterlimit="10"/>
<polyline points="150.9,1505.9 224.7,1505.9 298.4,1505.9 372.1,1505.9 445.9,1505.9 519.6,1505.9 593.4,1505.9 667.1,1505.9 740.9,1505.9 814.6,1505.9 888.4,1505.9 962.1,1505.9 1035.9,1505.9 1109.7,1505.9 1183.4,1288.9 1257.2,1505.9" fill="none" stroke="#ef6a7a" stroke-width="3.2" stroke-linejoin="miter" stroke-miterlimit="10"/>
<polyline points="150.9,1505.9 224.7,1505.9 298.4,1505.9 372.1,1505.9 445.9,1505.9 519.6,1505.9 593.4,1505.9 667.1,1505.9 740.9,1505.9 814.6,1505.9 888.4,1505.9 962.1,1505.9 1035.9,1505.9 1109.7,1505.9 1183.4,1210.0 1257.2,1505.9" fill="none" stroke="#919bdc" stroke-width="3.2" stroke-linejoin="miter" stroke-miterlimit="10"/>
<line x1="1508.5" y1="1505" x2="1508.5" y2="1515" stroke="#aeb4bf" stroke-width="2"/>
<line x1="1650.2" y1="1505" x2="1650.2" y2="1515" stroke="#aeb4bf" stroke-width="2"/>
<line x1="1792.0" y1="1505" x2="1792.0" y2="1515" stroke="#aeb4bf" stroke-width="2"/>
<line x1="1933.8" y1="1505" x2="1933.8" y2="1515" stroke="#aeb4bf" stroke-width="2"/>
<line x1="2075.5" y1="1505" x2="2075.5" y2="1515" stroke="#aeb4bf" stroke-width="2"/>
<line x1="2217.2" y1="1505" x2="2217.2" y2="1515" stroke="#aeb4bf" stroke-width="2"/>
<line x1="2359.0" y1="1505" x2="2359.0" y2="1515" stroke="#aeb4bf" stroke-width="2"/>
<line x1="2500.8" y1="1505" x2="2500.8" y2="1515" stroke="#aeb4bf" stroke-width="2"/>
<rect x="2252" y="1487" width="70" height="18.5" fill="#e8acac"/>
<rect x="2464" y="1487" width="70" height="18.5" fill="#591816"/>
</svg>
<div style="position:absolute;left:85.03px;top:1493.78px;font-family:'Liberation Sans';font-size:24.00px;line-height:24.00px;color:#8c95a6;font-weight:normal;white-space:pre;transform:scaleX(0.9000);transform-origin:0 0;">0</div>
<div style="position:absolute;left:73.01px;top:1434.60px;font-family:'Liberation Sans';font-size:24.00px;line-height:24.00px;color:#8c95a6;font-weight:normal;white-space:pre;transform:scaleX(0.9000);transform-origin:0 0;">30</div>
<div style="position:absolute;left:73.01px;top:1375.42px;font-family:'Liberation Sans';font-size:24.00px;line-height:24.00px;color:#8c95a6;font-weight:normal;white-space:pre;transform:scaleX(0.9000);transform-origin:0 0;">60</div>
<div style="position:absolute;left:73.01px;top:1316.24px;font-family:'Liberation Sans';font-size:24.00px;line-height:24.00px;color:#8c95a6;font-weight:normal;white-space:pre;transform:scaleX(0.9000);transform-origin:0 0;">90</div>
<div style="position:absolute;left:61.00px;top:1257.06px;font-family:'Liberation Sans';font-size:24.00px;line-height:24.00px;color:#8c95a6;font-weight:normal;white-space:pre;transform:scaleX(0.9000);transform-origin:0 0;">120</div>
<div style="position:absolute;left:61.00px;top:1197.88px;font-family:'Liberation Sans';font-size:24.00px;line-height:24.00px;color:#8c95a6;font-weight:normal;white-space:pre;transform:scaleX(0.9000);transform-origin:0 0;">150</div>
<div style="position:absolute;left:123.64px;top:1519.48px;font-family:'Liberation Sans';font-size:24.00px;line-height:24.00px;color:#8c95a6;font-weight:normal;white-space:pre;transform:scaleX(0.9000);transform-origin:0 0;">13:57</div>
<div style="position:absolute;left:120.97px;top:1541.48px;font-family:'Liberation Sans';font-size:24.00px;line-height:24.00px;color:#8c95a6;font-weight:normal;white-space:pre;transform:scaleX(0.9000);transform-origin:0 0;">04–19</div>
<div style="position:absolute;left:271.14px;top:1519.48px;font-family:'Liberation Sans';font-size:24.00px;line-height:24.00px;color:#8c95a6;font-weight:normal;white-space:pre;transform:scaleX(0.9000);transform-origin:0 0;">13:59</div>
<div style="position:absolute;left:268.47px;top:1541.48px;font-family:'Liberation Sans';font-size:24.00px;line-height:24.00px;color:#8c95a6;font-weight:normal;white-space:pre;transform:scaleX(0.9000);transform-origin:0 0;">04–19</div>
<div style="position:absolute;left:418.64px;top:1519.48px;font-family:'Liberation Sans';font-size:24.00px;line-height:24.00px;color:#8c95a6;font-weight:normal;white-space:pre;transform:scaleX(0.9000);transform-origin:0 0;">14:01</div>
<div style="position:absolute;left:415.97px;top:1541.48px;font-family:'Liberation Sans';font-size:24.00px;line-height:24.00px;color:#8c95a6;font-weight:normal;white-space:pre;transform:scaleX(0.9000);transform-origin:0 0;">04–19</div>
<div style="position:absolute;left:566.14px;top:1519.48px;font-family:'Liberation Sans';font-size:24.00px;line-height:24.00px;color:#8c95a6;font-weight:normal;white-space:pre;transform:scaleX(0.9000);transform-origin:0 0;">14:03</div>
<div style="position:absolute;left:563.47px;top:1541.48px;font-family:'Liberation Sans';font-size:24.00px;line-height:24.00px;color:#8c95a6;font-weight:normal;white-space:pre;transform:scaleX(0.9000);transform-origin:0 0;">04–19</div>
<div style="position:absolute;left:713.64px;top:1519.48px;font-family:'Liberation Sans';font-size:24.00px;line-height:24.00px;color:#8c95a6;font-weight:normal;white-space:pre;transform:scaleX(0.9000);transform-origin:0 0;">14:05</div>
<div style="position:absolute;left:710.97px;top:1541.48px;font-family:'Liberation Sans';font-size:24.00px;line-height:24.00px;color:#8c95a6;font-weight:normal;white-space:pre;transform:scaleX(0.9000);transform-origin:0 0;">04–19</div>
<div style="position:absolute;left:861.14px;top:1519.48px;font-family:'Liberation Sans';font-size:24.00px;line-height:24.00px;color:#8c95a6;font-weight:normal;white-space:pre;transform:scaleX(0.9000);transform-origin:0 0;">14:07</div>
<div style="position:absolute;left:858.47px;top:1541.48px;font-family:'Liberation Sans';font-size:24.00px;line-height:24.00px;color:#8c95a6;font-weight:normal;white-space:pre;transform:scaleX(0.9000);transform-origin:0 0;">04–19</div>
<div style="position:absolute;left:1008.64px;top:1519.48px;font-family:'Liberation Sans';font-size:24.00px;line-height:24.00px;color:#8c95a6;font-weight:normal;white-space:pre;transform:scaleX(0.9000);transform-origin:0 0;">14:09</div>
<div style="position:absolute;left:1005.97px;top:1541.48px;font-family:'Liberation Sans';font-size:24.00px;line-height:24.00px;color:#8c95a6;font-weight:normal;white-space:pre;transform:scaleX(0.9000);transform-origin:0 0;">04–19</div>
<div style="position:absolute;left:1156.94px;top:1519.48px;font-family:'Liberation Sans';font-size:24.00px;line-height:24.00px;color:#8c95a6;font-weight:normal;white-space:pre;transform:scaleX(0.9000);transform-origin:0 0;">14:11</div>
<div style="position:absolute;left:1153.47px;top:1541.48px;font-family:'Liberation Sans';font-size:24.00px;line-height:24.00px;color:#8c95a6;font-weight:normal;white-space:pre;transform:scaleX(0.9000);transform-origin:0 0;">04–19</div>
<div style="position:absolute;left:1444.23px;top:1483.18px;font-family:'Liberation Sans';font-size:24.00px;line-height:24.00px;color:#8c95a6;font-weight:normal;white-space:pre;transform:scaleX(0.9000);transform-origin:0 0;">0</div>
<div style="position:absolute;left:1420.20px;top:1449.13px;font-family:'Liberation Sans';font-size:24.00px;line-height:24.00px;color:#8c95a6;font-weight:normal;white-space:pre;transform:scaleX(0.9000);transform-origin:0 0;">200</div>
<div style="position:absolute;left:1420.20px;top:1415.08px;font-family:'Liberation Sans';font-size:24.00px;line-height:24.00px;color:#8c95a6;font-weight:normal;white-space:pre;transform:scaleX(0.9000);transform-origin:0 0;">400</div>
<div style="position:absolute;left:1420.20px;top:1381.03px;font-family:'Liberation Sans';font-size:24.00px;line-height:24.00px;color:#8c95a6;font-weight:normal;white-space:pre;transform:scaleX(0.9000);transform-origin:0 0;">600</div>
<div style="position:absolute;left:1420.20px;top:1346.98px;font-family:'Liberation Sans';font-size:24.00px;line-height:24.00px;color:#8c95a6;font-weight:normal;white-space:pre;transform:scaleX(0.9000);transform-origin:0 0;">800</div>
<div style="position:absolute;left:1408.19px;top:1312.93px;font-family:'Liberation Sans';font-size:24.00px;line-height:24.00px;color:#8c95a6;font-weight:normal;white-space:pre;transform:scaleX(0.9000);transform-origin:0 0;">1000</div>
<div style="position:absolute;left:1408.19px;top:1278.88px;font-family:'Liberation Sans';font-size:24.00px;line-height:24.00px;color:#8c95a6;font-weight:normal;white-space:pre;transform:scaleX(0.9000);transform-origin:0 0;">1200</div>
<div style="position:absolute;left:1408.19px;top:1244.83px;font-family:'Liberation Sans';font-size:24.00px;line-height:24.00px;color:#8c95a6;font-weight:normal;white-space:pre;transform:scaleX(0.9000);transform-origin:0 0;">1400</div>
<div style="position:absolute;left:1408.19px;top:1210.78px;font-family:'Liberation Sans';font-size:24.00px;line-height:24.00px;color:#8c95a6;font-weight:normal;white-space:pre;transform:scaleX(0.9000);transform-origin:0 0;">1600</div>
<div style="position:absolute;left:1408.19px;top:1176.73px;font-family:'Liberation Sans';font-size:24.00px;line-height:24.00px;color:#8c95a6;font-weight:normal;white-space:pre;transform:scaleX(0.9000);transform-origin:0 0;">1800</div>
<div style="position:absolute;left:1408.19px;top:1142.68px;font-family:'Liberation Sans';font-size:24.00px;line-height:24.00px;color:#8c95a6;font-weight:normal;white-space:pre;transform:scaleX(0.9000);transform-origin:0 0;">2000</div>
<div style="position:absolute;left:1481.24px;top:1519.48px;font-family:'Liberation Sans';font-size:24.00px;line-height:24.00px;color:#8c95a6;font-weight:normal;white-space:pre;transform:scaleX(0.9000);transform-origin:0 0;">13:57</div>
<div style="position:absolute;left:1478.57px;top:1541.48px;font-family:'Liberation Sans';font-size:24.00px;line-height:24.00px;color:#8c95a6;font-weight:normal;white-space:pre;transform:scaleX(0.9000);transform-origin:0 0;">04–19</div>
<div style="position:absolute;left:1622.99px;top:1519.48px;font-family:'Liberation Sans';font-size:24.00px;line-height:24.00px;color:#8c95a6;font-weight:normal;white-space:pre;transform:scaleX(0.9000);transform-origin:0 0;">13:59</div>
<div style="position:absolute;left:1620.32px;top:1541.48px;font-family:'Liberation Sans';font-size:24.00px;line-height:24.00px;color:#8c95a6;font-weight:normal;white-space:pre;transform:scaleX(0.9000);transform-origin:0 0;">04–19</div>
<div style="position:absolute;left:1764.74px;top:1519.48px;font-family:'Liberation Sans';font-size:24.00px;line-height:24.00px;color:#8c95a6;font-weight:normal;white-space:pre;transform:scaleX(0.9000);transform-origin:0 0;">14:01</div>
<div style="position:absolute;left:1762.07px;top:1541.48px;font-family:'Liberation Sans';font-size:24.00px;line-height:24.00px;color:#8c95a6;font-weight:normal;white-space:pre;transform:scaleX(0.9000);transform-origin:0 0;">04–19</div>
<div style="position:absolute;left:1906.49px;top:1519.48px;font-family:'Liberation Sans';font-size:24.00px;line-height:24.00px;color:#8c95a6;font-weight:normal;white-space:pre;transform:scaleX(0.9000);transform-origin:0 0;">14:03</div>
<div style="position:absolute;left:1903.82px;top:1541.48px;font-family:'Liberation Sans';font-size:24.00px;line-height:24.00px;color:#8c95a6;font-weight:normal;white-space:pre;transform:scaleX(0.9000);transform-origin:0 0;">04–19</div>
<div style="position:absolute;left:2048.24px;top:1519.48px;font-family:'Liberation Sans';font-size:24.00px;line-height:24.00px;color:#8c95a6;font-weight:normal;white-space:pre;transform:scaleX(0.9000);transform-origin:0 0;">14:05</div>
<div style="position:absolute;left:2045.57px;top:1541.48px;font-family:'Liberation Sans';font-size:24.00px;line-height:24.00px;color:#8c95a6;font-weight:normal;white-space:pre;transform:scaleX(0.9000);transform-origin:0 0;">04–19</div>
<div style="position:absolute;left:2189.99px;top:1519.48px;font-family:'Liberation Sans';font-size:24.00px;line-height:24.00px;color:#8c95a6;font-weight:normal;white-space:pre;transform:scaleX(0.9000);transform-origin:0 0;">14:07</div>
<div style="position:absolute;left:2187.32px;top:1541.48px;font-family:'Liberation Sans';font-size:24.00px;line-height:24.00px;color:#8c95a6;font-weight:normal;white-space:pre;transform:scaleX(0.9000);transform-origin:0 0;">04–19</div>
<div style="position:absolute;left:2331.74px;top:1519.48px;font-family:'Liberation Sans';font-size:24.00px;line-height:24.00px;color:#8c95a6;font-weight:normal;white-space:pre;transform:scaleX(0.9000);transform-origin:0 0;">14:09</div>
<div style="position:absolute;left:2329.07px;top:1541.48px;font-family:'Liberation Sans';font-size:24.00px;line-height:24.00px;color:#8c95a6;font-weight:normal;white-space:pre;transform:scaleX(0.9000);transform-origin:0 0;">04–19</div>
<div style="position:absolute;left:2474.29px;top:1519.48px;font-family:'Liberation Sans';font-size:24.00px;line-height:24.00px;color:#8c95a6;font-weight:normal;white-space:pre;transform:scaleX(0.9000);transform-origin:0 0;">14:11</div>
<div style="position:absolute;left:2470.82px;top:1541.48px;font-family:'Liberation Sans';font-size:24.00px;line-height:24.00px;color:#8c95a6;font-weight:normal;white-space:pre;transform:scaleX(0.9000);transform-origin:0 0;">04–19</div>
<div style="position:absolute;left:1724.24px;top:1702.99px;font-family:'Liberation Mono';font-size:26.00px;line-height:26.00px;color:#3c4555;font-weight:normal;white-space:pre;transform:scaleX(0.8373);transform-origin:0 0;">2022-04-19 13:57 ~ 2022-04-19 14:12</div>
<div style="position:absolute;left:2293.06px;top:1703.49px;font-family:'Liberation Sans';font-size:25.40px;line-height:25.40px;color:#3c4555;font-weight:normal;white-space:pre;transform:scaleX(0.9762);transform-origin:0 0;">En</div>
<div style="position:absolute;left:2352.23px;top:1702.49px;font-family:'Liberation Sans';font-size:25.40px;line-height:25.40px;color:#3c4555;font-weight:normal;white-space:pre;transform:scaleX(0.9704);transform-origin:0 0;">Server Zone UTC</div>
<div style="position:absolute;left:2553.11px;top:1702.49px;font-family:'Liberation Sans';font-size:25.40px;line-height:25.40px;color:#3c4555;font-weight:normal;white-space:pre;">+</div>
<div style="position:absolute;left:2572.01px;top:1703.99px;font-family:'Liberation Sans';font-size:25.40px;line-height:25.40px;color:#3c4555;font-weight:normal;white-space:pre;">0</div>
<svg style="position:absolute;left:0;top:1700px" width="2682" height="48" viewBox="0 1700 2682 48">
<path d="M0 1724 A22 22 0 0 0 22 1746 L0 1746 Z" fill="#1e105c"/>
<path d="M2682 1724 A22 22 0 0 1 2660 1746 L2682 1746 Z" fill="#15161a"/>
<rect x="0" y="1745.8" width="2682" height="2.2" fill="#131318"/>
<rect x="0" y="1745.8" width="300" height="2.2" fill="#1e105c"/>
</svg>
</body></html>
